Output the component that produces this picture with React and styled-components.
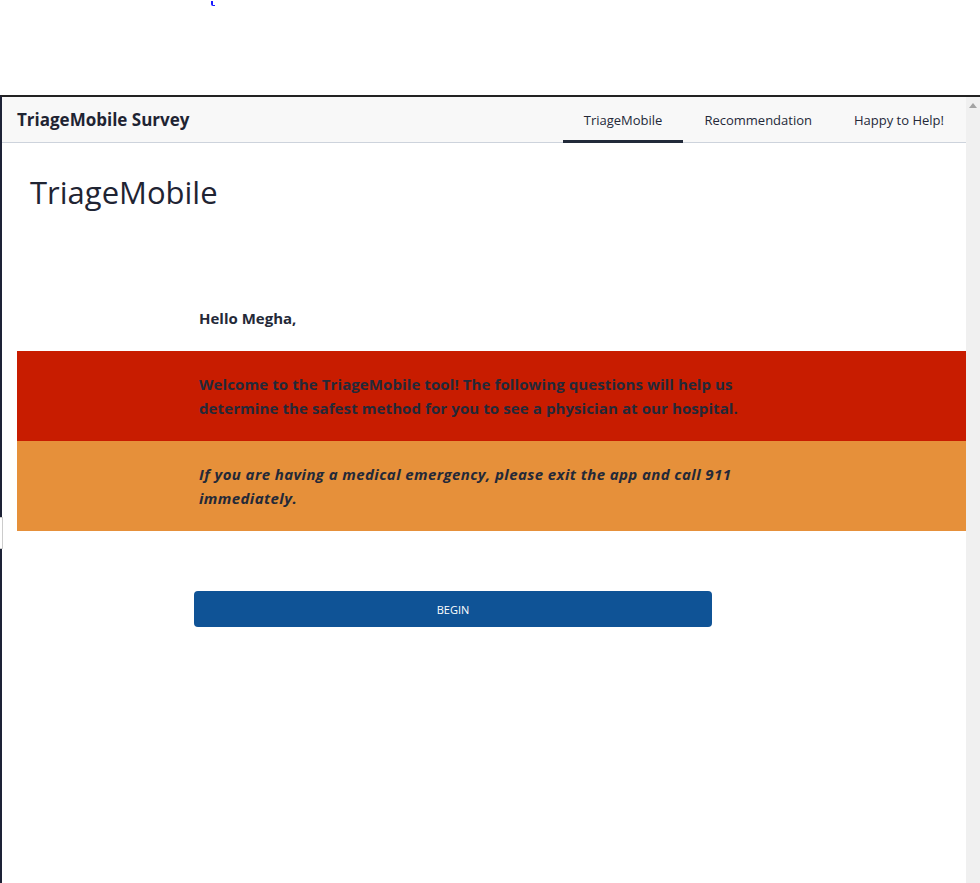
import React from 'react';
import styled, { createGlobalStyle } from 'styled-components'

/*
	:::: Styles ::::
*/
const GlobalStyle = createGlobalStyle`
	html, body {
		margin: 0;
		padding: 0;
		background: #fff;
	}
	body {
		font-family: "Open Sans", "Noto Sans", sans-serif;
		color: #242938;
	}
`;

const Page = styled.div`
	width: 980px;
	height: 883px;
	display: flex;
	flex-direction: column;
	overflow: hidden;
`;

const TopStrip = styled.div`
	height: 95px;
	padding-left: 211px;
	box-sizing: border-box;
`;

const Caret = styled.span`
	display: block;
	width: 2px;
	height: 4px;
	margin-top: 1px;
	border-left: 2px solid #1a1aff;
	border-bottom: 1px solid #1a1aff;
	border-bottom-left-radius: 2px;
`;

const Frame = styled.div`
	position: relative;
	flex: 1;
	display: flex;
	border-top: 2px solid #222;
	border-left: 2px solid #1d2236;
`;

const EdgeGap = styled.div`
	position: absolute;
	left: -2px;
	top: 420px;
	width: 2px;
	height: 30px;
	background: #fff;
	border: 1px solid #ccc;
	border-left: none;
`;

const Viewport = styled.div`
	flex: 1;
	display: flex;
	flex-direction: column;
`;

const Scrollbar = styled.div`
	width: 14px;
	background: #f0f0f0;
	display: flex;
	justify-content: center;
	padding-top: 6px;
	box-sizing: border-box;

	&::before {
		content: '';
		width: 0;
		height: 0;
		border-left: 4px solid transparent;
		border-right: 4px solid transparent;
		border-bottom: 5px solid #a3a3a3;
	}
`;

const Header = styled.header`
	height: 46px;
	display: flex;
	align-items: stretch;
	justify-content: space-between;
	padding-left: 15px;
	background: #f8f8f8;
	border-bottom: 1px solid #cdd3dc;
	box-sizing: border-box;
`;

const Brand = styled.div`
	display: flex;
	align-items: center;
	font-size: 17px;
	font-weight: 700;
	color: #1f2433;
`;

const Tabs = styled.nav`
	display: flex;
	align-items: stretch;
	margin-right: 1px;
`;

const Tab = styled.a`
	display: flex;
	align-items: center;
	padding: 2px 21px 0;
	font-size: 13px;
	color: #242938;
	text-decoration: none;
	border-bottom: 3px solid ${p => p.$active ? '#222a3a' : 'transparent'};
	margin-bottom: -1px;
	box-sizing: border-box;
`;

const Main = styled.main`
	padding-left: 15px;
	padding-top: 28px;
`;

const Heading = styled.h1`
	margin: 0 0 0 13px;
	font-size: 31px;
	font-weight: 400;
	line-height: 42px;
	color: #1f2433;
`;

const Greeting = styled.p`
	margin: 93px 0 21px;
	padding-left: 182px;
	font-size: 15px;
	font-weight: 700;
	line-height: 24px;
`;

const Band = styled.div`
	background: ${p => p.$tone};
	padding: 21px 0 21px 182px;
	box-sizing: border-box;
`;

const BandText = styled.p`
	margin: 0;
	max-width: 550px;
	font-size: 15px;
	font-weight: 700;
	line-height: 24px;
	font-style: ${p => p.$italic ? 'italic' : 'normal'};
	letter-spacing: ${p => p.$italic ? '0.4px' : '0.1px'};
	color: #242938;
`;

const BeginBtn = styled.button`
	display: block;
	margin: 60px 0 0 177px;
	width: 518px;
	height: 36px;
	border: none;
	border-radius: 4px;
	background: #0f5396;
	color: #fff;
	font-family: inherit;
	font-size: 11px;
	cursor: pointer;
`;

const App = () => {
	return (
	  <Page>
	  	<GlobalStyle />
	  	<TopStrip><Caret /></TopStrip>
	  	<Frame>
	  	  <EdgeGap />
	  	  <Viewport>
	  	  	<Header>
	  	  	  <Brand>TriageMobile Survey</Brand>
	  	  	  <Tabs>
	  	  	  	<Tab $active>TriageMobile</Tab>
	  	  	  	<Tab>Recommendation</Tab>
	  	  	  	<Tab>Happy to Help!</Tab>
	  	  	  </Tabs>
	  	  	</Header>
	  	  	<Main>
	  	  	  <Heading>TriageMobile</Heading>
	  	  	  <Greeting>Hello Megha,</Greeting>
	  	  	  <Band $tone="#c81c00">
	  	  	  	<BandText>Welcome to the TriageMobile tool! The following questions will help us determine the safest method for you to see a physician at our hospital.</BandText>
	  	  	  </Band>
	  	  	  <Band $tone="#e6903a">
	  	  	  	<BandText $italic>If you are having a medical emergency, please exit the app and call 911 immediately.</BandText>
	  	  	  </Band>
	  	  	  <BeginBtn>BEGIN</BeginBtn>
	  	  	</Main>
	  	  </Viewport>
	  	  <Scrollbar />
	  	</Frame>
	  </Page>
	);
}

export default App
